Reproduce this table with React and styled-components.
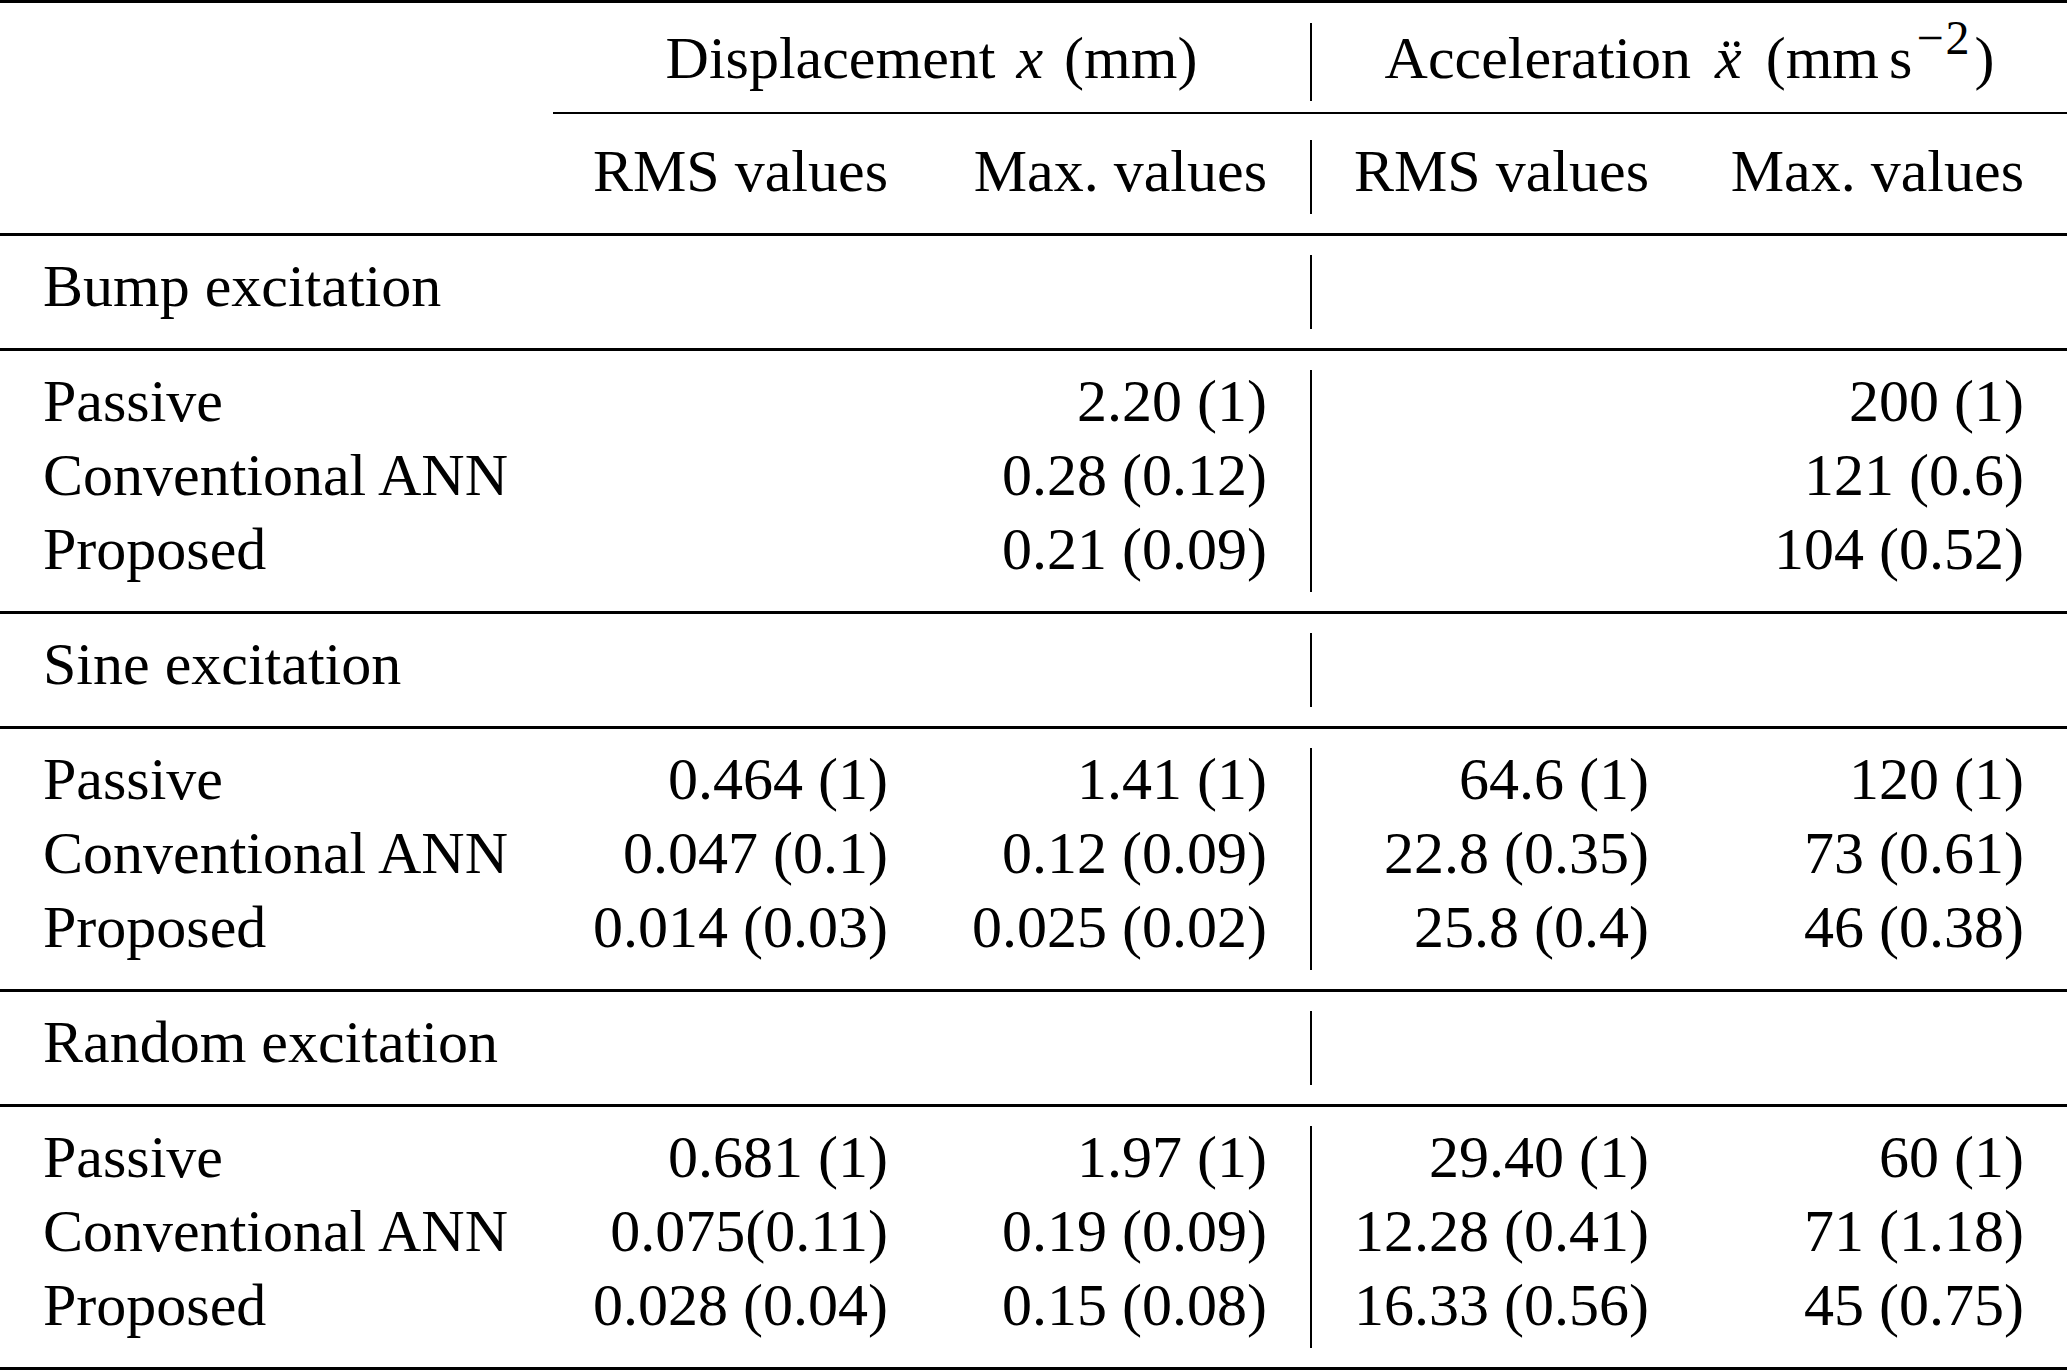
import React from "react";
import styled, { createGlobalStyle } from "styled-components";

const GlobalStyle = createGlobalStyle`
  html, body {
    margin: 0;
    padding: 0;
    background: #fff;
  }
  body {
    font-family: "Liberation Serif", "Times New Roman", serif;
    color: #000;
  }
`;

// label | RMS x | Max x || RMS acc | Max acc
const COLUMNS = "553px 378px 381px 380px 1fr";

const Table = styled.div`
  width: 2067px;
  font-size: 60px;
  border-top: 3px solid #000;
  border-bottom: 3px solid #000;
`;

const Section = styled.div`
  display: grid;
  grid-template-columns: ${COLUMNS};
  padding: ${(p) => p.$pad || "19px 0"};
`;

const Rule = styled.div`
  height: 3px;
  background: #000;
`;

const RuleRow = styled.div`
  display: grid;
  grid-template-columns: ${COLUMNS};
`;

const PartRule = styled.div`
  grid-column: 2 / -1;
  height: 2px;
  background: #000;
`;

const Cell = styled.div`
  box-sizing: border-box;
  line-height: 63.5px;
  padding: ${(p) => (p.$top ? "4px" : "0")} ${(p) => (p.$label ? "0" : "43px")}
    10.5px ${(p) => (p.$label ? "43px" : "0")};
  text-align: ${(p) => (p.$label ? "left" : "right")};
  white-space: nowrap;
  border-right: ${(p) => (p.$divider ? "2px solid #000" : "none")};
`;

const SpanCell = styled.div`
  box-sizing: border-box;
  grid-column: span 2;
  line-height: 63.5px;
  padding: 4px 0 10.5px;
  text-align: center;
  white-space: nowrap;
  border-right: ${(p) => (p.$divider ? "2px solid #000" : "none")};
`;

const MathVar = styled.i`
  font-style: italic;
  margin: 0 6px;
`;

const Ddot = styled.i`
  position: relative;
  font-style: italic;
  margin: 0 9px;
  &::after {
    content: "\\00A8";
    position: absolute;
    top: 0;
    left: 0.1em;
    right: 0;
    text-align: center;
    line-height: normal;
    font-style: normal;
  }
`;

const Unit = styled.span`
  margin-left: 10px;
`;

const Sup = styled.sup`
  font-size: 48px;
  line-height: 0;
  vertical-align: 24px;
  margin: 0 3px 0 4px;
  letter-spacing: 2px;
`;

const groups = [
  {
    title: "Bump excitation",
    rows: [
      ["Passive", "", "2.20 (1)", "", "200 (1)"],
      ["Conventional ANN", "", "0.28 (0.12)", "", "121 (0.6)"],
      ["Proposed", "", "0.21 (0.09)", "", "104 (0.52)"],
    ],
  },
  {
    title: "Sine excitation",
    rows: [
      ["Passive", "0.464 (1)", "1.41 (1)", "64.6 (1)", "120 (1)"],
      ["Conventional ANN", "0.047 (0.1)", "0.12 (0.09)", "22.8 (0.35)", "73 (0.61)"],
      ["Proposed", "0.014 (0.03)", "0.025 (0.02)", "25.8 (0.4)", "46 (0.38)"],
    ],
  },
  {
    title: "Random excitation",
    rows: [
      ["Passive", "0.681 (1)", "1.97 (1)", "29.40 (1)", "60 (1)"],
      ["Conventional ANN", "0.075(0.11)", "0.19 (0.09)", "12.28 (0.41)", "71 (1.18)"],
      ["Proposed", "0.028 (0.04)", "0.15 (0.08)", "16.33 (0.56)", "45 (0.75)"],
    ],
  },
];

function DataRow({ row }) {
  return (
    <>
      <Cell $label>{row[0]}</Cell>
      <Cell>{row[1]}</Cell>
      <Cell $divider>{row[2]}</Cell>
      <Cell>{row[3]}</Cell>
      <Cell>{row[4]}</Cell>
    </>
  );
}

export default function App() {
  return (
    <>
      <GlobalStyle />
      <Table>
        <Section $pad="20px 0 11px">
          <Cell $label $top />
          <SpanCell $divider>
            Displacement <MathVar>x</MathVar> (mm)
          </SpanCell>
          <SpanCell>
            Acceleration <Ddot>x</Ddot> (mm<Unit>s</Unit>
            <Sup>{"\u22122"}</Sup>)
          </SpanCell>
        </Section>
        <RuleRow>
          <PartRule />
        </RuleRow>
        <Section $pad="26px 0 19px">
          <Cell $label />
          <Cell>RMS values</Cell>
          <Cell $divider>Max. values</Cell>
          <Cell>RMS values</Cell>
          <Cell>Max. values</Cell>
        </Section>
        <Rule />
        {groups.map((g, i) => (
          <React.Fragment key={g.title}>
            <Section>
              <Cell $label>{g.title}</Cell>
              <Cell />
              <Cell $divider />
              <Cell />
              <Cell />
            </Section>
            <Rule />
            <Section>
              {g.rows.map((r) => (
                <DataRow key={r[0]} row={r} />
              ))}
            </Section>
            {i < groups.length - 1 && <Rule />}
          </React.Fragment>
        ))}
      </Table>
    </>
  );
}
